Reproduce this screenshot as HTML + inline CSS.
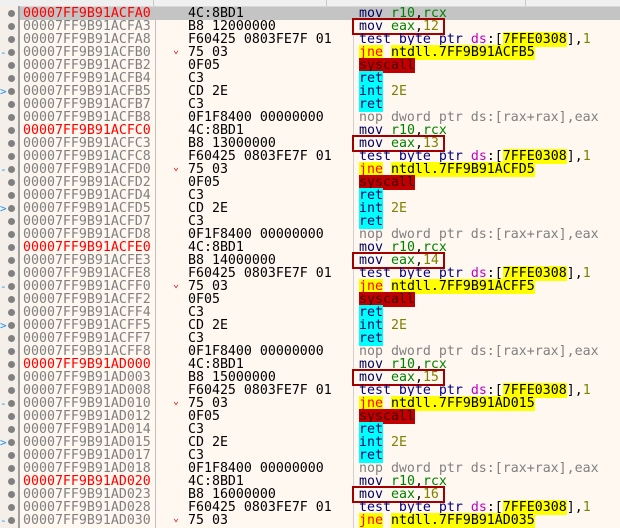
<!DOCTYPE html>
<html><head><meta charset="utf-8"><style>
body{margin:0;width:620px;height:528px;overflow:hidden;background:#fff8f0;position:relative;font-family:"DejaVu Sans Mono","Liberation Mono",monospace;font-size:13.28px;}
#hdr{position:absolute;left:0;top:0;width:620px;height:6px;background:#f0f0f0;border-bottom:1px solid #d8d8d8}
.vl{position:absolute;top:0;width:1px;background:#c8c8c8}
#gut{position:absolute;left:0;top:6px;width:18px;height:522px;background:#f4efe8;border-right:2px solid #a0a0a0}
.r{position:absolute;left:0;width:620px;height:13px;line-height:13px;white-space:pre}
.hl{background:#c4c4c4;left:20px;width:600px;position:absolute;top:0;height:13px}
.dot{position:absolute;left:8px;top:3px;width:7px;height:7px;border-radius:50%;background:#808080}
.mk{position:absolute;left:0;top:0;color:#1e90ff;font-size:11px}
.a{position:absolute;left:23px;color:#808080}
.a.red{color:#ff0000}
.b{position:absolute;left:188px;color:#000}
.j{position:absolute;left:173px;top:-2px;color:#e00000;font-size:10px}
.d{position:absolute;left:359px;color:#000}
.k{color:#000060}.t{color:#000080}.g{color:#008000}.o{color:#808000}.m{color:#c000c0}
.y{background:#ffff00}.jr{background:#ffff00;color:#ff0000}
.sc{background:#c00000;color:#400000}.cy{background:#00ffff;color:#000060}
.gr{color:#808080}
.box{position:absolute;left:352px;width:89px;height:13px;border:2px solid #a00000;top:-2px}
</style></head><body>
<div id="hdr"></div>
<div class="vl" style="left:153px;height:6px"></div>
<div class="vl" style="left:326px;height:6px"></div>
<div class="vl" style="left:525px;height:6px"></div>
<div id="gut"></div>
<div class="vl" style="left:155px;top:6px;height:522px;background:#c0c0c0"></div>
<div class="vl" style="left:353px;top:6px;height:522px;background:#d0d0d0"></div>

<div class="r" style="top:6.5px"><div class="hl"></div><div class="dot"></div><span class="a red">00007FF9B91ACFA0</span><span class="b">4C:8BD1</span><span class="d"><span class="k">mov</span> <span class="g">r10</span>,<span class="g">rcx</span></span></div>
<div class="r" style="top:19.5px"><div class="dot"></div><span class="a">00007FF9B91ACFA3</span><span class="b">B8 12000000</span><div class="box"></div><span class="d"><span class="k">mov</span> <span class="g">eax</span>,<span class="o">12</span></span></div>
<div class="r" style="top:32.5px"><div class="dot"></div><span class="a">00007FF9B91ACFA8</span><span class="b">F60425 0803FE7F 01</span><span class="d"><span class="t">test byte ptr</span> <span class="m">ds</span>:[<span class="y">7FFE0308</span>],<span class="o">1</span></span></div>
<div class="r" style="top:45.5px"><span class="mk">-</span><div class="dot"></div><span class="a">00007FF9B91ACFB0</span><span class="j">&#8964;</span><span class="b">75 03</span><span class="d"><span class="jr">jne</span> <span class="y">ntdll.7FF9B91ACFB5</span></span></div>
<div class="r" style="top:58.5px"><div class="dot"></div><span class="a">00007FF9B91ACFB2</span><span class="b">0F05</span><span class="d"><span class="sc">syscall</span></span></div>
<div class="r" style="top:71.5px"><div class="dot"></div><span class="a">00007FF9B91ACFB4</span><span class="b">C3</span><span class="d"><span class="cy">ret</span></span></div>
<div class="r" style="top:84.5px"><span class="mk">&gt;</span><div class="dot"></div><span class="a">00007FF9B91ACFB5</span><span class="b">CD 2E</span><span class="d"><span class="cy">int</span> <span class="o">2E</span></span></div>
<div class="r" style="top:97.5px"><div class="dot"></div><span class="a">00007FF9B91ACFB7</span><span class="b">C3</span><span class="d"><span class="cy">ret</span></span></div>
<div class="r" style="top:110.5px"><div class="dot"></div><span class="a">00007FF9B91ACFB8</span><span class="b">0F1F8400 00000000</span><span class="d gr">nop dword ptr ds:[rax+rax],eax</span></div>

<div class="r" style="top:123.5px"><div class="dot"></div><span class="a red">00007FF9B91ACFC0</span><span class="b">4C:8BD1</span><span class="d"><span class="k">mov</span> <span class="g">r10</span>,<span class="g">rcx</span></span></div>
<div class="r" style="top:136.5px"><div class="dot"></div><span class="a">00007FF9B91ACFC3</span><span class="b">B8 13000000</span><div class="box"></div><span class="d"><span class="k">mov</span> <span class="g">eax</span>,<span class="o">13</span></span></div>
<div class="r" style="top:149.5px"><div class="dot"></div><span class="a">00007FF9B91ACFC8</span><span class="b">F60425 0803FE7F 01</span><span class="d"><span class="t">test byte ptr</span> <span class="m">ds</span>:[<span class="y">7FFE0308</span>],<span class="o">1</span></span></div>
<div class="r" style="top:162.5px"><span class="mk">-</span><div class="dot"></div><span class="a">00007FF9B91ACFD0</span><span class="j">&#8964;</span><span class="b">75 03</span><span class="d"><span class="jr">jne</span> <span class="y">ntdll.7FF9B91ACFD5</span></span></div>
<div class="r" style="top:175.5px"><div class="dot"></div><span class="a">00007FF9B91ACFD2</span><span class="b">0F05</span><span class="d"><span class="sc">syscall</span></span></div>
<div class="r" style="top:188.5px"><div class="dot"></div><span class="a">00007FF9B91ACFD4</span><span class="b">C3</span><span class="d"><span class="cy">ret</span></span></div>
<div class="r" style="top:201.5px"><span class="mk">&gt;</span><div class="dot"></div><span class="a">00007FF9B91ACFD5</span><span class="b">CD 2E</span><span class="d"><span class="cy">int</span> <span class="o">2E</span></span></div>
<div class="r" style="top:214.5px"><div class="dot"></div><span class="a">00007FF9B91ACFD7</span><span class="b">C3</span><span class="d"><span class="cy">ret</span></span></div>
<div class="r" style="top:227.5px"><div class="dot"></div><span class="a">00007FF9B91ACFD8</span><span class="b">0F1F8400 00000000</span><span class="d gr">nop dword ptr ds:[rax+rax],eax</span></div>

<div class="r" style="top:240.5px"><div class="dot"></div><span class="a red">00007FF9B91ACFE0</span><span class="b">4C:8BD1</span><span class="d"><span class="k">mov</span> <span class="g">r10</span>,<span class="g">rcx</span></span></div>
<div class="r" style="top:253.5px"><div class="dot"></div><span class="a">00007FF9B91ACFE3</span><span class="b">B8 14000000</span><div class="box"></div><span class="d"><span class="k">mov</span> <span class="g">eax</span>,<span class="o">14</span></span></div>
<div class="r" style="top:266.5px"><div class="dot"></div><span class="a">00007FF9B91ACFE8</span><span class="b">F60425 0803FE7F 01</span><span class="d"><span class="t">test byte ptr</span> <span class="m">ds</span>:[<span class="y">7FFE0308</span>],<span class="o">1</span></span></div>
<div class="r" style="top:279.5px"><span class="mk">-</span><div class="dot"></div><span class="a">00007FF9B91ACFF0</span><span class="j">&#8964;</span><span class="b">75 03</span><span class="d"><span class="jr">jne</span> <span class="y">ntdll.7FF9B91ACFF5</span></span></div>
<div class="r" style="top:292.5px"><div class="dot"></div><span class="a">00007FF9B91ACFF2</span><span class="b">0F05</span><span class="d"><span class="sc">syscall</span></span></div>
<div class="r" style="top:305.5px"><div class="dot"></div><span class="a">00007FF9B91ACFF4</span><span class="b">C3</span><span class="d"><span class="cy">ret</span></span></div>
<div class="r" style="top:318.5px"><span class="mk">&gt;</span><div class="dot"></div><span class="a">00007FF9B91ACFF5</span><span class="b">CD 2E</span><span class="d"><span class="cy">int</span> <span class="o">2E</span></span></div>
<div class="r" style="top:331.5px"><div class="dot"></div><span class="a">00007FF9B91ACFF7</span><span class="b">C3</span><span class="d"><span class="cy">ret</span></span></div>
<div class="r" style="top:344.5px"><div class="dot"></div><span class="a">00007FF9B91ACFF8</span><span class="b">0F1F8400 00000000</span><span class="d gr">nop dword ptr ds:[rax+rax],eax</span></div>

<div class="r" style="top:357.5px"><div class="dot"></div><span class="a red">00007FF9B91AD000</span><span class="b">4C:8BD1</span><span class="d"><span class="k">mov</span> <span class="g">r10</span>,<span class="g">rcx</span></span></div>
<div class="r" style="top:370.5px"><div class="dot"></div><span class="a">00007FF9B91AD003</span><span class="b">B8 15000000</span><div class="box"></div><span class="d"><span class="k">mov</span> <span class="g">eax</span>,<span class="o">15</span></span></div>
<div class="r" style="top:383.5px"><div class="dot"></div><span class="a">00007FF9B91AD008</span><span class="b">F60425 0803FE7F 01</span><span class="d"><span class="t">test byte ptr</span> <span class="m">ds</span>:[<span class="y">7FFE0308</span>],<span class="o">1</span></span></div>
<div class="r" style="top:396.5px"><span class="mk">-</span><div class="dot"></div><span class="a">00007FF9B91AD010</span><span class="j">&#8964;</span><span class="b">75 03</span><span class="d"><span class="jr">jne</span> <span class="y">ntdll.7FF9B91AD015</span></span></div>
<div class="r" style="top:409.5px"><div class="dot"></div><span class="a">00007FF9B91AD012</span><span class="b">0F05</span><span class="d"><span class="sc">syscall</span></span></div>
<div class="r" style="top:422.5px"><div class="dot"></div><span class="a">00007FF9B91AD014</span><span class="b">C3</span><span class="d"><span class="cy">ret</span></span></div>
<div class="r" style="top:435.5px"><span class="mk">&gt;</span><div class="dot"></div><span class="a">00007FF9B91AD015</span><span class="b">CD 2E</span><span class="d"><span class="cy">int</span> <span class="o">2E</span></span></div>
<div class="r" style="top:448.5px"><div class="dot"></div><span class="a">00007FF9B91AD017</span><span class="b">C3</span><span class="d"><span class="cy">ret</span></span></div>
<div class="r" style="top:461.5px"><div class="dot"></div><span class="a">00007FF9B91AD018</span><span class="b">0F1F8400 00000000</span><span class="d gr">nop dword ptr ds:[rax+rax],eax</span></div>

<div class="r" style="top:474.5px"><div class="dot"></div><span class="a red">00007FF9B91AD020</span><span class="b">4C:8BD1</span><span class="d"><span class="k">mov</span> <span class="g">r10</span>,<span class="g">rcx</span></span></div>
<div class="r" style="top:487.5px"><div class="dot"></div><span class="a">00007FF9B91AD023</span><span class="b">B8 16000000</span><div class="box"></div><span class="d"><span class="k">mov</span> <span class="g">eax</span>,<span class="o">16</span></span></div>
<div class="r" style="top:500.5px"><div class="dot"></div><span class="a">00007FF9B91AD028</span><span class="b">F60425 0803FE7F 01</span><span class="d"><span class="t">test byte ptr</span> <span class="m">ds</span>:[<span class="y">7FFE0308</span>],<span class="o">1</span></span></div>
<div class="r" style="top:513.5px"><span class="mk">-</span><div class="dot"></div><span class="a">00007FF9B91AD030</span><span class="j">&#8964;</span><span class="b">75 03</span><span class="d"><span class="jr">jne</span> <span class="y">ntdll.7FF9B91AD035</span></span></div>
</body></html>
